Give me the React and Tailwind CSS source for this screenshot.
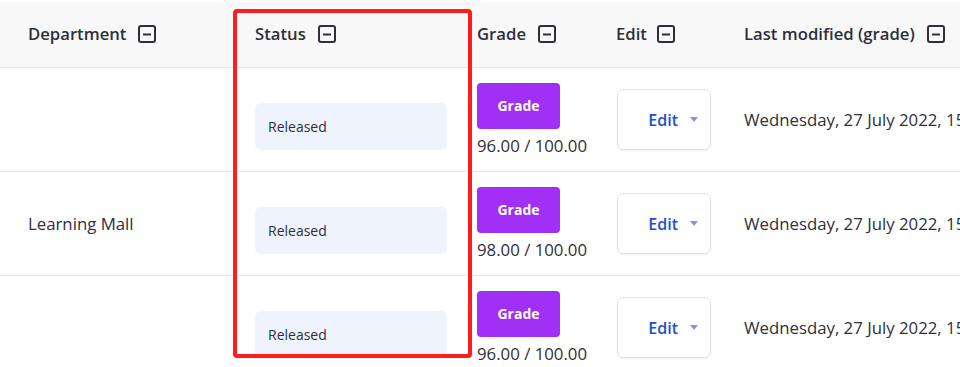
import React from "react";

const rows = [
  { dept: "", score: "96.00 / 100.00" },
  { dept: "Learning Mall", score: "98.00 / 100.00" },
  { dept: "", score: "96.00 / 100.00" },
];

function CollapseIcon() {
  return (
    <svg width="18" height="18" viewBox="0 0 18 18" fill="none" className="shrink-0">
      <rect x="1" y="1" width="16" height="16" rx="2" stroke="#2f2f3a" strokeWidth="2" />
      <line x1="5" y1="9.5" x2="13" y2="9.5" stroke="#2f2f3a" strokeWidth="2" />
    </svg>
  );
}

function HeaderCell({ label, first, gap = "gap-3" }) {
  return (
    <div className={`flex items-center whitespace-nowrap ${gap} ${first ? "pl-[28px]" : ""}`}>
      <span className="text-[16.7px] font-semibold text-[#2f2f3a]">{label}</span>
      <CollapseIcon />
    </div>
  );
}

export default function App() {
  return (
    <div
      className="relative h-[367px] w-[960px] overflow-hidden bg-white"
      style={{ fontFamily: "'Open Sans', 'Noto Sans', sans-serif" }}
    >
      <div className="mt-[2px] grid h-[66px] grid-cols-[255px_222px_139px_128px_1fr] border-b border-[#e4e4e4] bg-[#f8f8f8] pb-[2px]">
        <HeaderCell label="Department" first />
        <HeaderCell label="Status" />
        <HeaderCell label="Grade" />
        <HeaderCell label="Edit" gap="gap-2.5" />
        <HeaderCell label="Last modified (grade)" />
      </div>

      {rows.map((row, i) => (
        <div
          key={i}
          className="grid h-[104px] grid-cols-[255px_222px_139px_128px_1fr] border-b border-[#e4e4e4]"
        >
          <div className="flex items-center pl-[28px] text-[16.8px] text-[#2f2f3a]">{row.dept}</div>
          <div className="flex items-center">
            <div className="mt-[14px] flex h-[47px] w-[192px] items-center rounded-md bg-[#eef3fd] pl-[13px] text-[14px] text-[#2f2f3a]">
              Released
            </div>
          </div>
          <div className="flex flex-col justify-center">
            <div className="flex h-[46px] w-[83px] items-center justify-center rounded bg-[#a22ff6] text-[14px] font-bold text-white">
              Grade
            </div>
            <div className="mt-[6px] whitespace-nowrap text-[16.8px] leading-[22px] text-[#2f2f3a]">{row.score}</div>
          </div>
          <div className="flex items-center">
            <div className="ml-px flex h-[61px] w-[94px] items-center justify-end gap-[12px] rounded-md border border-[#e2e2ea] bg-white pr-[12px] shadow-[0_1px_2px_rgba(0,0,0,0.06)]">
              <span className="text-[16px] font-semibold text-[#1a4fd8]">Edit</span>
              <span className="h-0 w-0 border-x-[4.5px] border-t-[5px] border-x-transparent border-t-[#7b96e6]" />
            </div>
          </div>
          <div className="flex items-center whitespace-nowrap text-[16.8px] text-[#2f2f3a]">
            Wednesday, 27 July 2022, 15:42
          </div>
        </div>
      ))}

      <div className="pointer-events-none absolute left-[233px] top-[9px] h-[349px] w-[239px] rounded-[4px] border-4 border-[#ff1c1c]" />
    </div>
  );
}
